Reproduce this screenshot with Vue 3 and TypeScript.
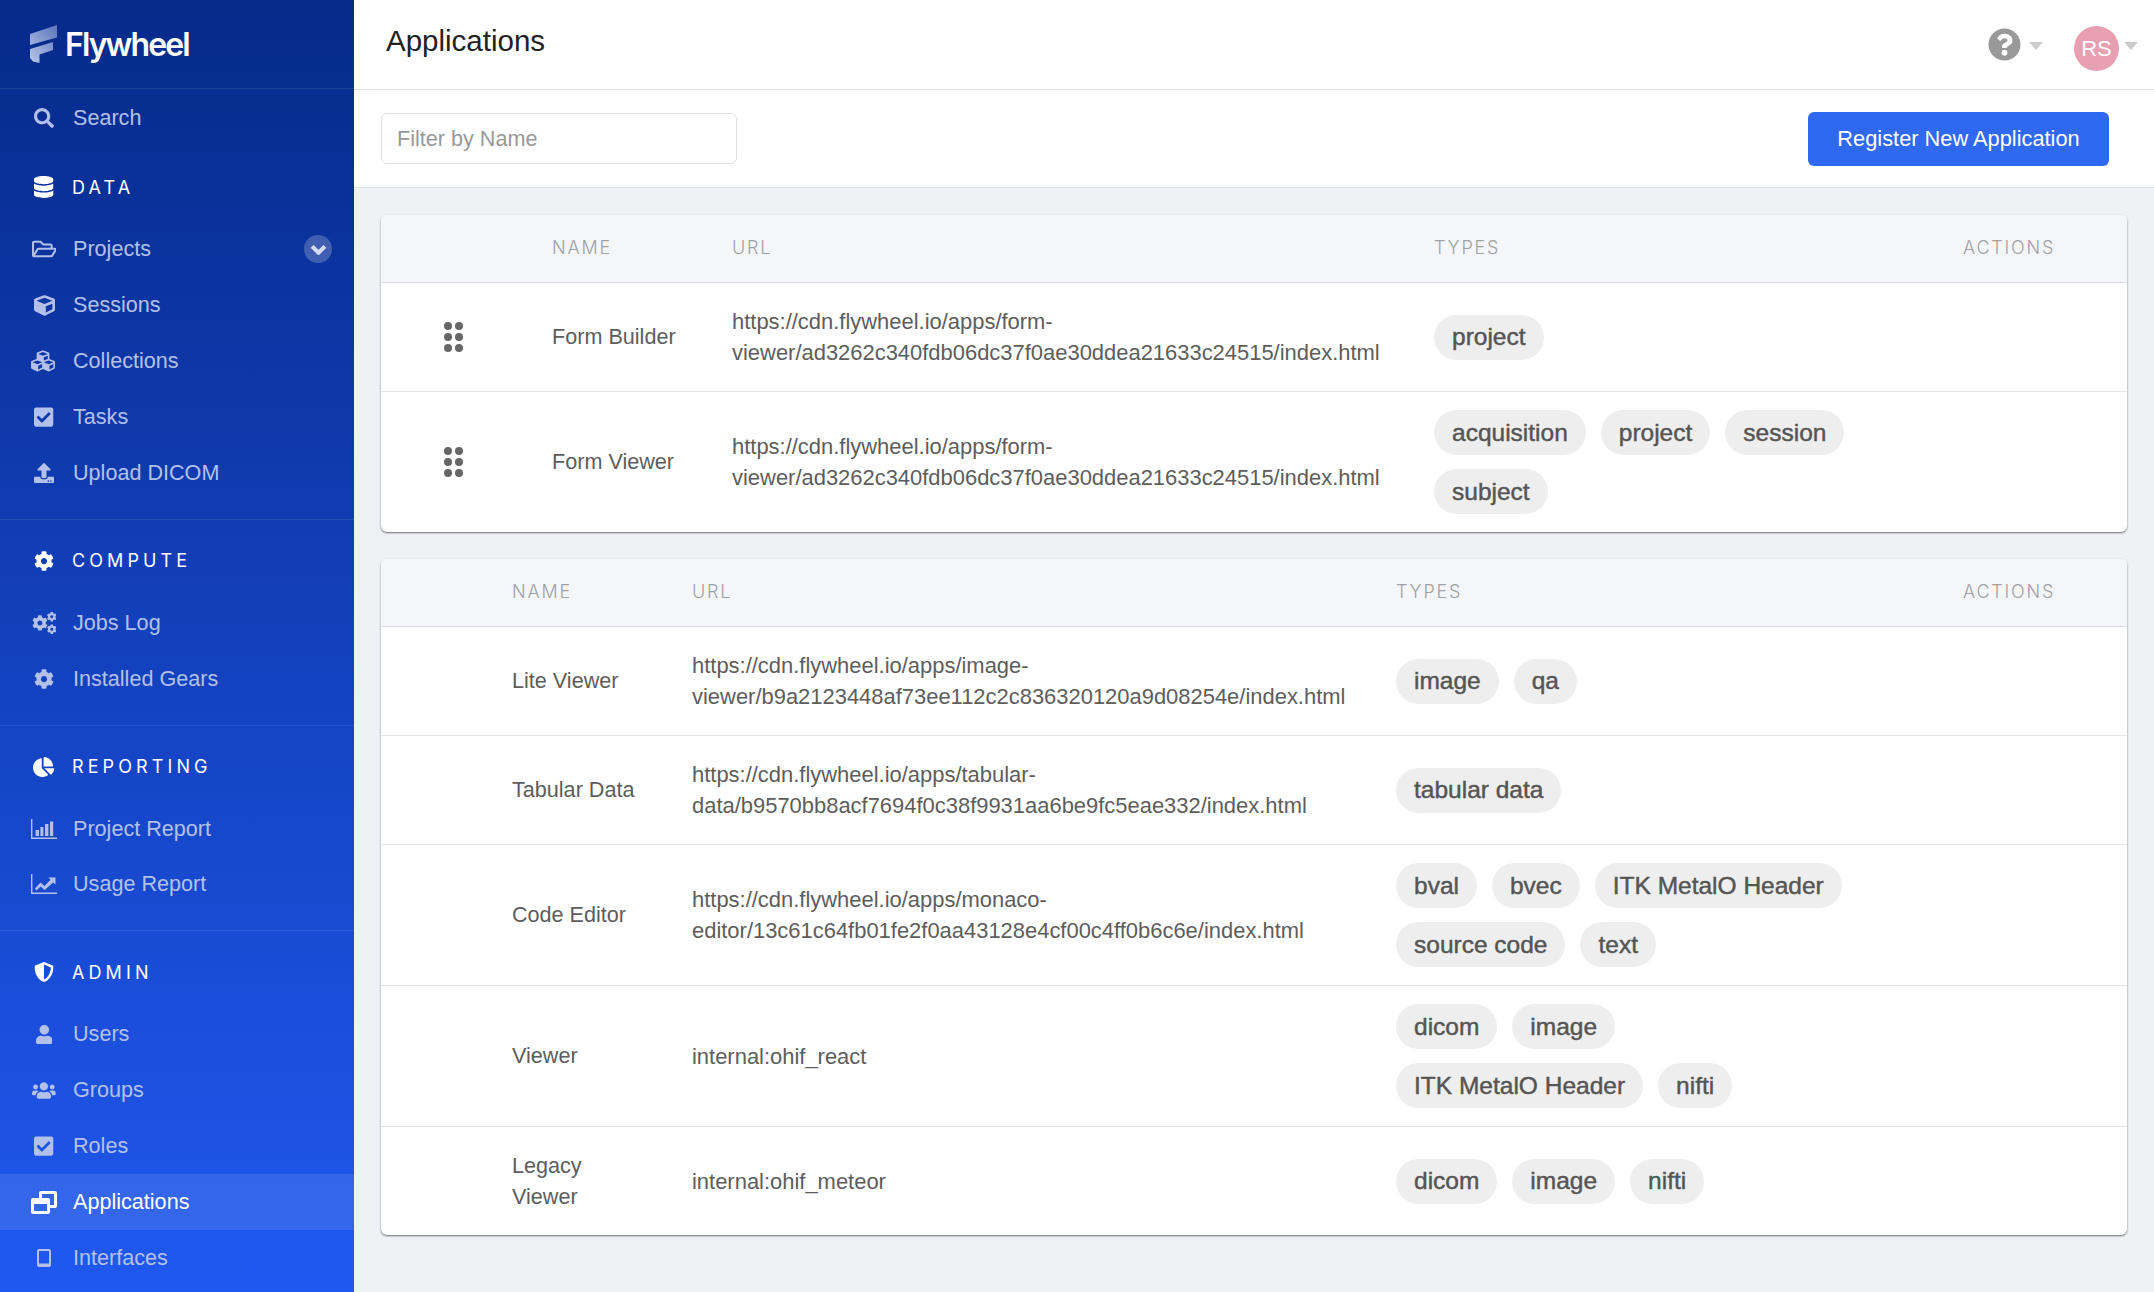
<script setup lang="ts">
interface P { d: string; t?: string }
interface Ic { vb: string; p: P[]; cls?: string }
const cogD = 'M487.4 315.7l-42.6-24.6c4.3-23.2 4.3-47 0-70.2l42.6-24.6c4.9-2.8 7.1-8.6 5.5-14-11.1-35.6-30-67.8-54.7-94.6-3.8-4.1-10-5.1-14.8-2.3L380.8 110c-17.9-15.4-38.5-27.3-60.8-35.1V25.8c0-5.6-3.9-10.5-9.4-11.7-36.7-8.2-74.3-7.8-109.2 0-5.5 1.2-9.4 6.1-9.4 11.7V75c-22.2 7.9-42.8 19.8-60.8 35.1L88.7 85.5c-4.9-2.8-11-1.9-14.8 2.3-24.7 26.7-43.6 58.9-54.7 94.6-1.7 5.4.6 11.2 5.5 14L67.3 221c-4.3 23.2-4.3 47 0 70.2l-42.6 24.6c-4.9 2.8-7.1 8.6-5.5 14 11.1 35.6 30 67.8 54.7 94.6 3.8 4.1 10 5.1 14.8 2.3l42.6-24.6c17.9 15.4 38.5 27.3 60.8 35.1v49.2c0 5.6 3.9 10.5 9.4 11.7 36.7 8.2 74.3 7.8 109.2 0 5.5-1.2 9.4-6.1 9.4-11.7v-49.2c22.2-7.9 42.8-19.8 60.8-35.1l42.6 24.6c4.9 2.8 11 1.9 14.8-2.3 24.7-26.7 43.6-58.9 54.7-94.6 1.5-5.5-.7-11.3-5.6-14.1zM256 336c-44.1 0-80-35.9-80-80s35.9-80 80-80 80 35.9 80 80-35.9 80-80 80z'
const checkD = 'M400 480H48c-26.51 0-48-21.49-48-48V80c0-26.51 21.49-48 48-48h352c26.51 0 48 21.49 48 48v352c0 26.51-21.49 48-48 48zm-204.686-98.059l184-184c6.248-6.248 6.248-16.379 0-22.627l-22.627-22.627c-6.248-6.248-16.379-6.249-22.628 0L184 302.745l-70.059-70.059c-6.248-6.248-16.379-6.248-22.628 0l-22.627 22.627c-6.248 6.248-6.248 16.379 0 22.627l104 104c6.249 6.25 16.379 6.25 22.628.001z'
const icons: Record<string, Ic> = {
  search: { vb: '0 0 512 512', cls: 'h20', p: [{ d: 'M505 442.7L405.3 343c-4.5-4.5-10.6-7-17-7H372c27.6-35.3 44-79.7 44-128C416 93.1 322.9 0 208 0S0 93.1 0 208s93.1 208 208 208c48.3 0 92.7-16.4 128-44v16.3c0 6.4 2.5 12.5 7 17l99.7 99.7c9.4 9.4 24.6 9.4 33.9 0l28.3-28.3c9.4-9.4 9.4-24.6.1-34zM208 336c-70.7 0-128-57.2-128-128 0-70.7 57.2-128 128-128 70.7 0 128 57.2 128 128 0 70.7-57.2 128-128 128z' }] },
  database: { vb: '0 0 448 512', p: [{ d: 'M448 73.143v45.714C448 159.143 347.667 192 224 192S0 159.143 0 118.857V73.143C0 32.857 100.333 0 224 0s224 32.857 224 73.143zM448 176v102.857C448 319.143 347.667 352 224 352S0 319.143 0 278.857V176c48.125 33.143 136.208 48.572 224 48.572S399.874 209.143 448 176zm0 160v102.857C448 479.143 347.667 512 224 512S0 479.143 0 438.857V336c48.125 33.143 136.208 48.572 224 48.572S399.874 369.143 448 336z' }] },
  folder: { vb: '0 0 576 512', p: [{ d: 'M527.9 224H480v-48c0-26.5-21.5-48-48-48H272l-64-64H48C21.5 64 0 85.5 0 112v288c0 26.5 21.5 48 48 48h400c16.5 0 31.9-8.5 40.7-22.6l79.9-128c20-31.9-3-73.4-40.7-73.4zM48 118c0-3.3 2.7-6 6-6h134.1l64 64H426c3.3 0 6 2.7 6 6v42H152c-16.8 0-32.4 8.8-41.1 23.2L48 351.4zm400 282H72l77.2-128H528z' }] },
  cube: { vb: '0 0 512 512', cls: 'h21', p: [{ d: 'M239.1 6.3l-208 78c-18.7 7-31.1 25-31.1 45v225.1c0 18.2 10.3 34.8 26.5 42.9l208 104c13.5 6.8 29.4 6.8 42.9 0l208-104c16.3-8.1 26.5-24.8 26.5-42.9V129.3c0-20-12.4-37.9-31.1-44.9l-208-78C262 2.2 250 2.2 239.1 6.3zM256 68.4l192 72v1.1l-192 78-192-78v-1.1l192-72zm32 356V275.5l160-65v133.9l-160 80z' }] },
  cubes: { vb: '0 0 576 512', cls: 'h24', p: [{ d: 'M488.6 250.2L392 214V105.5c0-15-9.3-28.4-23.4-33.7l-100-37.5c-8.1-3.1-17.1-3.1-25.3 0l-100 37.5c-14.1 5.3-23.4 18.7-23.4 33.7V214l-96.6 36.2C9.3 255.5 0 268.9 0 283.9V394c0 13.6 7.7 26.1 19.9 32.2l100 50c10.1 5.1 22.1 5.1 32.2 0l103.9-52 103.9 52c10.1 5.1 22.1 5.1 32.2 0l100-50c12.2-6.1 19.9-18.6 19.9-32.2V283.9c0-15-9.3-28.4-23.4-33.7zM358 214.8l-85 31.9v-68.2l85-37v73.3zM154 104.1l102-38.2 102 38.2v.6l-102 41.4-102-41.4v-.6zm84 291.1l-85 42.5v-79.1l85-38.8v75.4zm0-112l-102 41.4-102-41.4v-.6l102-38.2 102 38.2v.6zm240 112l-85 42.5v-79.1l85-38.8v75.4zm0-112l-102 41.4-102-41.4v-.6l102-38.2 102 38.2v.6z' }] },
  check: { vb: '0 0 448 512', p: [{ d: checkD }] },
  upload: { vb: '0 0 512 512', cls: 'h20', p: [{ d: 'M296 384h-80c-13.3 0-24-10.7-24-24V192h-87.7c-17.8 0-26.7-21.5-14.1-34.1L242.3 5.7c7.5-7.5 19.8-7.5 27.3 0l152.2 152.2c12.6 12.6 3.7 34.1-14.1 34.1H320v168c0 13.3-10.7 24-24 24zm216-8v112c0 13.3-10.7 24-24 24H24c-13.3 0-24-10.7-24-24V376c0-13.3 10.7-24 24-24h136v8c0 30.9 25.1 56 56 56h80c30.9 0 56-25.1 56-56v-8h136c13.3 0 24 10.7 24 24zm-124 88c0-11-9-20-20-20s-20 9-20 20 9 20 20 20 20-9 20-20zm64 0c0-11-9-20-20-20s-20 9-20 20 9 20 20 20 20-9 20-20z' }] },
  cog: { vb: '0 0 512 512', cls: 'h20', p: [{ d: cogD }] },
  cogs: { vb: '0 0 576 512', p: [
    { d: cogD, t: 'translate(0 70) scale(.72)' },
    { d: cogD, t: 'translate(345 -4) scale(.45)' },
    { d: cogD, t: 'translate(345 285) scale(.45)' }
  ] },
  pie: { vb: '0 0 544 512', cls: 'h20', p: [{ d: 'M527.79 288H290.5l158.03 158.03c6.04 6.04 15.98 6.53 22.19 .68 38.7-36.46 65.32-85.61 73.13-140.86 1.34-9.46-6.51-17.85-16.06-17.85zm-15.83-64.8C503.72 103.74 408.26 8.28 288.8.04 279.68-.59 272 7.1 272 16.24V240h223.77c9.14 0 16.82-7.68 16.19-16.8zM224 288V50.71c0-9.55-8.39-17.4-17.84-16.06C86.99 51.49-4.1 155.6.14 280.37 4.5 408.51 114.83 513.59 243.03 511.98c50.4-.63 96.97-16.87 135.26-44.03 7.9-5.6 8.42-17.23 1.57-24.08L224 288z' }] },
  bars: { vb: '0 0 26 20', cls: 'h20', p: [{ d: 'M0 0H1.4V18.6H26V20H0ZM4.6 11H8V17H4.6ZM9.4 8H12.4V17H9.4ZM14 5H17.4V17H14ZM19 2.5H22.2V17H19Z' }] },
  line: { vb: '0 0 26 20', cls: 'h20', p: [{ d: 'M0 0H1.4V18.6H26V20H0ZM4 14.5L9.5 8.5L13.5 12L19.5 5.8L17.4 3.6H24.5V10.6L22.3 8.5L13.6 16L9.6 12.4L5.5 16.5Z' }] },
  shield: { vb: '0 0 512 512', cls: 'h20', p: [{ d: 'M466.5 83.7l-192-80a48.15 48.15 0 0 0-36.9 0l-192 80C27.7 91.1 16 108.6 16 128c0 198.5 114.5 335.7 221.5 380.3 11.8 4.9 25.1 4.9 36.9 0C360.1 472.6 496 349.3 496 128c0-19.4-11.7-36.9-29.5-44.3zM256.1 446.3l-.1-381 175.9 73.3c-3.3 151.4-82.1 261.1-175.8 307.7z' }] },
  user: { vb: '0 0 448 512', cls: 'h19', p: [{ d: 'M224 256c70.7 0 128-57.3 128-128S294.7 0 224 0 96 57.3 96 128s57.3 128 128 128zm89.6 32h-16.7c-22.2 10.2-46.9 16-72.9 16s-50.6-5.8-72.9-16h-16.7C60.2 288 0 348.2 0 422.4V464c0 26.5 21.5 48 48 48h352c26.5 0 48-21.5 48-48v-41.6c0-74.2-60.2-134.4-134.4-134.4z' }] },
  users: { vb: '0 0 640 512', cls: 'h19', p: [{ d: 'M96 224c35.3 0 64-28.7 64-64s-28.7-64-64-64-64 28.7-64 64 28.7 64 64 64zm448 0c35.3 0 64-28.7 64-64s-28.7-64-64-64-64 28.7-64 64 28.7 64 64 64zm32 32h-64c-17.6 0-33.5 7.1-45.1 18.6 40.3 22.1 68.9 62 75.1 109.4h66c17.7 0 32-14.3 32-32v-32c0-35.3-28.7-64-64-64zm-256 0c61.9 0 112-50.1 112-112S381.9 32 320 32 208 82.1 208 144s50.1 112 112 112zm76.8 32h-8.3c-20.8 10-43.9 16-68.5 16s-47.6-6-68.5-16h-8.3C179.6 288 128 339.6 128 403.2V432c0 26.5 21.5 48 48 48h288c26.5 0 48-21.5 48-48v-28.8c0-63.6-51.6-115.2-115.2-115.2zm-223.7-13.4C161.5 263.1 145.6 256 128 256H64c-35.3 0-64 28.7-64 64v32c0 17.7 14.3 32 32 32h65.9c6.3-47.4 34.9-87.3 75.2-109.4z' }] },
  windows: { vb: '0 0 26 23', cls: 'h23', p: [{ d: 'M10 0H24a2 2 0 0 1 2 2V15a2 2 0 0 1-2 2H19V21a2 2 0 0 1-2 2H2a2 2 0 0 1-2-2V9a2 2 0 0 1 2-2H8V2a2 2 0 0 1 2-2ZM3 13V20H16V13ZM11 3V7H17a2 2 0 0 1 2 2V14H23V3Z' }] },
  tablet: { vb: '0 0 14 18', cls: 'h18', p: [{ d: 'M2 0H12a2 2 0 0 1 2 2V16a2 2 0 0 1-2 2H2a2 2 0 0 1-2-2V2a2 2 0 0 1 2-2ZM2 2V14.5H12V2Z' }] }
}
const groups = [
  { title: 'DATA', icon: 'database', cls: 'g-data', items: [
    { label: 'Projects', icon: 'folder', badge: true }, { label: 'Sessions', icon: 'cube' },
    { label: 'Collections', icon: 'cubes' }, { label: 'Tasks', icon: 'check' }, { label: 'Upload DICOM', icon: 'upload' }
  ] },
  { title: 'COMPUTE', icon: 'cog', cls: 'g-more', items: [
    { label: 'Jobs Log', icon: 'cogs' }, { label: 'Installed Gears', icon: 'cog' }
  ] },
  { title: 'REPORTING', icon: 'pie', cls: 'g-more', items: [
    { label: 'Project Report', icon: 'bars' }, { label: 'Usage Report', icon: 'line' }
  ] },
  { title: 'ADMIN', icon: 'shield', cls: 'g-more', items: [
    { label: 'Users', icon: 'user' }, { label: 'Groups', icon: 'users' }, { label: 'Roles', icon: 'check' },
    { label: 'Applications', icon: 'windows', active: true }, { label: 'Interfaces', icon: 'tablet' }
  ] }
]
const formApps = [
  { name: 'Form Builder', url: 'https://cdn.flywheel.io/apps/form-viewer/ad3262c340fdb06dc37f0ae30ddea21633c24515/index.html', types: ['project'] },
  { name: 'Form Viewer', url: 'https://cdn.flywheel.io/apps/form-viewer/ad3262c340fdb06dc37f0ae30ddea21633c24515/index.html', types: ['acquisition', 'project', 'session', 'subject'] }
]
const apps = [
  { name: 'Lite Viewer', url: 'https://cdn.flywheel.io/apps/image-viewer/b9a2123448af73ee112c2c836320120a9d08254e/index.html', types: ['image', 'qa'] },
  { name: 'Tabular Data', url: 'https://cdn.flywheel.io/apps/tabular-data/b9570bb8acf7694f0c38f9931aa6be9fc5eae332/index.html', types: ['tabular data'] },
  { name: 'Code Editor', url: 'https://cdn.flywheel.io/apps/monaco-editor/13c61c64fb01fe2f0aa43128e4cf00c4ff0b6c6e/index.html', types: ['bval', 'bvec', 'ITK MetalO Header', 'source code', 'text'] },
  { name: 'Viewer', url: 'internal:ohif_react', types: ['dicom', 'image', 'ITK MetalO Header', 'nifti'] },
  { name: 'Legacy Viewer', url: 'internal:ohif_meteor', types: ['dicom', 'image', 'nifti'] }
]
const tables = [
  { cls: 'with-handle', rows: formApps, handle: true },
  { cls: 'plain', rows: apps, handle: false }
]
</script>

<template>
  <div class="shell">
    <aside class="sidebar">
      <div class="brand">
        <svg class="mark" viewBox="0 0 27 38">
          <defs>
            <linearGradient id="markGrad" x1="0.9" y1="0" x2="0.1" y2="1">
              <stop offset="0" stop-color="#5f79bd" />
              <stop offset="1" stop-color="#b4c3e6" />
            </linearGradient>
          </defs>
          <path fill="url(#markGrad)" d="M0 9L27 0V12.5L0 20ZM0 24L23 17V25L9.5 29.5V38L3 36.5L0 33Z" />
        </svg>
        <span class="wordmark">Flywheel</span>
      </div>
      <div class="item search">
        <span class="slot"><svg :viewBox="icons.search.vb" class="h20"><path v-for="p in icons.search.p" :key="p.d" :d="p.d" /></svg></span>
        <span>Search</span>
      </div>
      <section v-for="g in groups" :key="g.title" class="group" :class="g.cls">
        <div class="group-title">
          <span class="slot"><svg :viewBox="icons[g.icon].vb" :class="icons[g.icon].cls"><path v-for="p in icons[g.icon].p" :key="p.d" :d="p.d" /></svg></span>
          <span class="group-text">{{ g.title }}</span>
        </div>
        <div class="group-items">
          <div v-for="it in g.items" :key="it.label" class="item" :class="{ active: it.active }">
            <span class="slot">
              <svg :viewBox="icons[it.icon].vb" :class="icons[it.icon].cls">
                <path v-for="(p, i) in icons[it.icon].p" :key="i" :d="p.d" :transform="p.t" fill-rule="evenodd" />
              </svg>
            </span>
            <span>{{ it.label }}</span>
            <span v-if="it.badge" class="badge">
              <svg viewBox="0 0 16 10"><path d="M2 2L8 8L14 2" /></svg>
            </span>
          </div>
        </div>
      </section>
    </aside>

    <main class="main">
      <header class="topbar">
        <h1 class="title">Applications</h1>
        <div class="tools">
          <svg class="help" viewBox="0 0 512 512">
            <path d="M504 256c0 136.997-111.043 248-248 248S8 392.997 8 256C8 119.083 119.043 8 256 8s248 111.083 248 248zM262.655 90c-54.497 0-89.255 22.957-116.549 63.758-3.536 5.286-2.353 12.415 2.715 16.258l34.699 26.31c5.205 3.947 12.621 3.008 16.665-2.122 17.864-22.658 30.113-35.797 57.303-35.797 20.429 0 45.698 13.148 45.698 32.958 0 14.976-12.363 22.667-32.534 33.976C247.128 238.528 216 254.941 216 296v4c0 6.627 5.373 12 12 12h56c6.627 0 12-5.373 12-12v-1.333c0-28.462 83.186-29.647 83.186-106.667 0-58.002-60.165-102-116.531-102zM256 338c-25.365 0-46 20.635-46 46 0 25.364 20.635 46 46 46s46-20.636 46-46c0-25.365-20.635-46-46-46z" />
          </svg>
          <span class="caret"></span>
          <span class="avatar">RS</span>
          <span class="caret caret-end"></span>
        </div>
      </header>
      <div class="toolbar">
        <input class="filter" type="text" placeholder="Filter by Name" />
        <button class="primary" type="button">Register New Application</button>
      </div>
      <div class="content">
        <div v-for="t in tables" :key="t.cls" class="card" :class="t.cls">
          <div class="row head">
            <span></span>
            <span>NAME</span>
            <span>URL</span>
            <span>TYPES</span>
            <span>ACTIONS</span>
          </div>
          <div v-for="r in t.rows" :key="r.name" class="row body">
            <span class="handle-cell">
              <svg v-if="t.handle" class="handle" viewBox="0 0 19 30">
                <circle cx="4" cy="4" r="4" /><circle cx="15" cy="4" r="4" />
                <circle cx="4" cy="15" r="4" /><circle cx="15" cy="15" r="4" />
                <circle cx="4" cy="26" r="4" /><circle cx="15" cy="26" r="4" />
              </svg>
            </span>
            <span class="name">{{ r.name }}</span>
            <span class="url">{{ r.url }}</span>
            <span class="chips">
              <span v-for="c in r.types" :key="c" class="chip">{{ c }}</span>
            </span>
            <span></span>
          </div>
        </div>
      </div>
    </main>
  </div>
</template>

<style scoped>
.shell {
  display: flex;
  width: 2154px;
  height: 1292px;
  overflow: hidden;
  font-family: "Liberation Sans", Arial, sans-serif;
  font-size: 21.6px;
  background: #eff1f5;
}
.sidebar {
  flex: 0 0 354px;
  height: 1292px;
  overflow: hidden;
  background: linear-gradient(180deg, #062a8a 0%, #2058f0 100%);
  color: #b3c1ea;
}
.brand {
  display: flex;
  align-items: center;
  height: 89px;
  padding-left: 30px;
  box-sizing: border-box;
  border-bottom: 1px solid rgba(255, 255, 255, 0.09);
}
.mark {
  width: 27px;
  height: 38px;
  margin-right: 8px;
}
.wordmark {
  font-family: Inter, sans-serif;
  font-size: 32px;
  font-weight: 600;
  letter-spacing: -1.9px;
  color: #fff;
}
.item {
  position: relative;
  display: flex;
  align-items: center;
  height: 55.9px;
  padding-left: 22px;
}
.search {
  margin-top: 1px;
}
.slot {
  display: flex;
  align-items: center;
  justify-content: center;
  flex: 0 0 44px;
  margin-right: 7px;
}
.slot svg {
  height: 22px;
  fill: currentColor;
}
.slot svg.h18 {
  height: 18px;
}
.slot svg.h19 {
  height: 19px;
}
.slot svg.h20 {
  height: 20px;
}
.slot svg.h21 {
  height: 21px;
}
.slot svg.h23 {
  height: 23px;
}
.slot svg.h24 {
  height: 24px;
}
.active {
  background: rgba(255, 255, 255, 0.1);
  color: #fff;
}
.badge {
  position: absolute;
  left: 304px;
  top: 14px;
  display: flex;
  align-items: center;
  justify-content: center;
  width: 28px;
  height: 28px;
  border-radius: 50%;
  background: rgba(255, 255, 255, 0.22);
}
.badge svg {
  width: 17px;
  height: 11px;
  fill: none;
  stroke: #d5ddf5;
  stroke-width: 3.8;
}
.group {
  padding-bottom: 18px;
  border-bottom: 1px solid rgba(255, 255, 255, 0.08);
}
.group:last-child {
  border-bottom: 0;
}
.g-data {
  margin-top: 13.5px;
}
.g-more {
  padding-top: 13px;
}
.group-title {
  display: flex;
  align-items: center;
  height: 56px;
  padding-left: 22px;
  color: #fff;
}
.group-title .slot {
  margin-right: 6px;
}
.group-text {
  font-family: Inter, sans-serif;
  font-size: 18px;
  letter-spacing: 4.1px;
}
.group-items {
  margin-top: 6px;
}
.main {
  flex: 1;
  min-width: 0;
  display: flex;
  flex-direction: column;
}
.topbar {
  display: flex;
  justify-content: space-between;
  align-items: flex-start;
  height: 90px;
  box-sizing: border-box;
  padding: 26px 16px 0 32px;
  background: #fff;
  border-bottom: 1px solid #dde1e8;
}
.title {
  margin: 0;
  font-size: 29.5px;
  line-height: 30px;
  font-weight: 400;
  color: #222;
}
.tools {
  display: flex;
  align-items: flex-start;
}
.help {
  width: 33px;
  height: 33px;
  margin-top: 2px;
  fill: #999;
}
.caret {
  width: 0;
  height: 0;
  margin: 16px 31px 0 8px;
  border-left: 7px solid transparent;
  border-right: 7px solid transparent;
  border-top: 8px solid #ccc;
}
.caret-end {
  margin: 16px 0 0 5px;
}
.avatar {
  display: flex;
  align-items: center;
  justify-content: center;
  width: 45px;
  height: 45px;
  border-radius: 50%;
  background: #e89fb2;
  color: #fff;
  font-size: 22px;
}
.toolbar {
  display: flex;
  justify-content: space-between;
  align-items: center;
  height: 98px;
  box-sizing: border-box;
  padding: 0 45px 0 27px;
  background: #fff;
  border-bottom: 1px solid #dfe2e7;
}
.filter {
  width: 356px;
  height: 51px;
  box-sizing: border-box;
  padding: 0 15px;
  border: 1px solid #dfe1e5;
  border-radius: 6px;
  outline: 0;
  font: 21.6px "Liberation Sans", Arial, sans-serif;
  color: #555;
  background: #fff;
}
.filter::placeholder {
  color: #999;
  opacity: 1;
}
.primary {
  width: 301px;
  height: 54px;
  padding: 0;
  border: 0;
  border-radius: 6px;
  background: #2f68f1;
  color: #fff;
  font: 21.8px "Liberation Sans", Arial, sans-serif;
}
.content {
  display: flex;
  flex-direction: column;
  gap: 27px;
  padding: 27px 27px 0;
}
.card {
  background: #fff;
  border-radius: 6px;
  overflow: hidden;
  box-shadow: 0 1px 2px rgba(0, 0, 0, 0.55);
}
.row {
  display: grid;
  align-items: center;
  color: #5d5d5d;
}
.with-handle .row {
  grid-template-columns: 171px 180px 702px 529px 164px;
}
.plain .row {
  grid-template-columns: 131px 180px 704px 567px 164px;
}
.head {
  height: 68px;
  padding-bottom: 2px;
  background: #f4f6fa;
  border-bottom: 1px solid #dcdfe4;
  box-sizing: border-box;
  font-family: Inter, sans-serif;
  font-size: 18px;
  font-weight: 300;
  letter-spacing: 1.8px;
  color: #9ea1a6;
}
.body {
  min-height: 108px;
  border-bottom: 1px solid #e3e5e9;
}
.body:last-child {
  border-bottom: 0;
}
.handle-cell {
  display: flex;
  justify-content: center;
  padding-right: 27px;
}
.handle {
  width: 19px;
  height: 30px;
  fill: #666;
}
.name {
  padding-right: 50px;
  padding-bottom: 1px;
  line-height: 31px;
}
.url {
  line-height: 31px;
  font-size: 21.95px;
  padding-right: 30px;
}
.chips {
  display: flex;
  flex-wrap: wrap;
  max-width: 450px;
  gap: 14px 15px;
  padding: 18px 0;
}
.chip {
  display: inline-flex;
  align-items: center;
  height: 45px;
  padding: 0 18px;
  border-radius: 23px;
  background: #eeeeee;
  color: #555;
  font-size: 24.5px;
  -webkit-text-stroke: 0.45px #555;
}
</style>
